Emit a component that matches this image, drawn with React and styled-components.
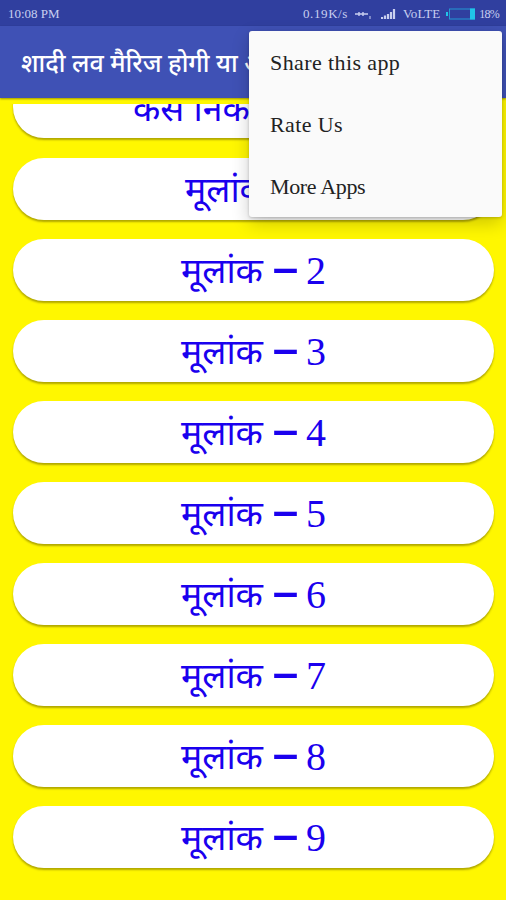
import React from "react";
import styled, { createGlobalStyle } from "styled-components";

const GlobalStyle = createGlobalStyle`
  * {
    box-sizing: border-box;
  }
  body {
    margin: 0;
    background: #fff700;
  }
`;

const serif = `"Liberation Serif", serif`;
const hindi = `"Noto Sans", "Noto Sans Devanagari", sans-serif`;

const Screen = styled.div`
  position: relative;
  display: flex;
  flex-direction: column;
  width: 506px;
  height: 900px;
  overflow: hidden;
  background: #fff700;
`;

/*
==============================================
                 Header
*/
const StatusBar = styled.div`
  display: flex;
  align-items: center;
  flex: none;
  height: 26px;
  padding: 1px 7px 0 8px;
  background: #303f9f;
  color: #c9cff0;
  font: 13px/26px ${serif};
  white-space: nowrap;
`;

const StatusText = styled.span`
  width: ${p => p.$width}px;
  margin-left: ${p => p.$left || 0}px;
  font-size: ${p => p.$size || 13}px;
  letter-spacing: ${p => p.$spacing || 0}px;
`;

const StatusIcon = styled.svg`
  display: block;
  flex: none;
  margin-left: ${p => p.$left}px;
`;

const Toolbar = styled.header`
  position: relative;
  z-index: 1;
  flex: none;
  height: 72px;
  padding-left: 21px;
  background: #3f51b5;
  box-shadow: 0 1px 2px rgba(0, 0, 0, 0.4);
`;

const Title = styled.h1`
  margin: 0;
  color: #fff;
  font: 500 25px/72px ${hindi};
  white-space: nowrap;
`;

/*
==============================================
                 List
*/
const List = styled.main`
  display: flex;
  flex-direction: column;
  gap: 19.1px;
  flex: 1;
  min-height: 0;
  margin-top: 6px;
  padding: 0 12px 0 13px;
  overflow: hidden;
`;

const Row = styled.div`
  display: flex;
  flex: none;
  height: 62px;
  padding-left: ${p => p.$indent || 168}px;
  border-radius: 31px;
  background: #fff;
  color: #1a00ee;
  box-shadow: 0 2px 2px rgba(70, 60, 0, 0.42);
  line-height: 62px;
  white-space: nowrap;
`;

const FirstRow = styled(Row)`
  margin-top: -27.6px;
  font: 35.6px/62px ${hindi};
`;

const Name = styled.span`
  width: 91px;
  font-family: ${hindi};
  font-size: 35.6px;
  line-height: 60px;
`;

const Dash = styled.span`
  width: 34px;
  font-family: ${hindi};
  font-size: 54px;
  line-height: 52px;
`;

const Digit = styled.span`
  font-family: ${serif};
  font-size: 40px;
  line-height: 64px;
`;

/*
==============================================
                 Overflow menu
*/
const Menu = styled.nav`
  position: absolute;
  z-index: 2;
  top: 31px;
  left: 249px;
  width: 253px;
  height: 186px;
  border-radius: 3px;
  background: #fafafa;
  box-shadow: 0 6px 18px rgba(0, 0, 0, 0.2), 0 1px 3px rgba(0, 0, 0, 0.2);
`;

const MenuItem = styled.div`
  height: 62px;
  padding-left: 21px;
  color: #222;
  font: 22px/64px ${serif};
  letter-spacing: ${p => p.$spacing}px;
  white-space: nowrap;
`;

const numbers = [1, 2, 3, 4, 5, 6, 7, 8, 9];

const menuItems = [
  { label: "Share this app", spacing: 0.4 },
  { label: "Rate Us", spacing: 0.4 },
  { label: "More Apps", spacing: -0.35 }
];

const App = () => (
  <React.Fragment>
    <GlobalStyle />
    <Screen>
      <StatusBar>
        <StatusText $width={60}>10:08 PM</StatusText>
        <StatusText $width={45} $left={236} $spacing={0.6}>
          0.19K/s
        </StatusText>
        <StatusIcon $left={7} width="18" height="12" viewBox="0 0 18 12">
          <path d="M0 6h13M4 4v4M8 4v4" stroke="#c9cff0" strokeWidth="1.4" />
          <path d="M15 8v3" stroke="#c9cff0" strokeWidth="1" />
        </StatusIcon>
        <StatusIcon $left={8} width="15" height="12" viewBox="0 0 15 12">
          <path
            d="M1 11V9M4 11V7.5M7 11V6M10 11V4M13 11V1"
            stroke="#c9cff0"
            strokeWidth="2.2"
          />
        </StatusIcon>
        <StatusText $width={38} $left={7} $spacing={0.1}>
          VoLTE
        </StatusText>
        <StatusIcon $left={6} width="30" height="12" viewBox="0 0 30 12">
          <path d="M0 4h2v4H0z" fill="#20c4e8" />
          <rect
            x="3.5"
            y="1"
            width="25"
            height="10"
            fill="none"
            stroke="#2398d4"
          />
          <path d="M24 0.5h5v11h-5z" fill="#20c4e8" />
        </StatusIcon>
        <StatusText $width={20} $left={3} $size={12} $spacing={-0.8}>
          18%
        </StatusText>
      </StatusBar>
      <Toolbar>
        <Title>शादी लव मैरिज होगी या अरेंज</Title>
      </Toolbar>
      <List>
        <FirstRow $indent={120}>कैसे निकाले</FirstRow>
        {numbers.map(n => (
          <Row key={n} $indent={n === 1 ? 172 : 168}>
            <Name>मूलांक</Name>
            <Dash>–</Dash>
            <Digit>{n}</Digit>
          </Row>
        ))}
      </List>
      <Menu>
        {menuItems.map(item => (
          <MenuItem key={item.label} $spacing={item.spacing}>
            {item.label}
          </MenuItem>
        ))}
      </Menu>
    </Screen>
  </React.Fragment>
);

export default App;
